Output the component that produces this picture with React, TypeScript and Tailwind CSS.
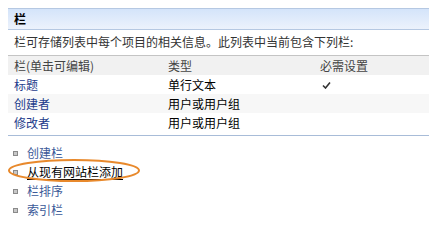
const font = { fontFamily: '"Noto Sans CJK SC", "Liberation Sans", sans-serif' };

function Bullet() {
  return <span className="mr-[9px] inline-block h-[5px] w-[5px] border border-[#8a8a8a] bg-[#c8c8c8]" />;
}

export default function App() {
  const rows = [
    { name: "标题", type: "单行文本", req: true },
    { name: "创建者", type: "用户或用户组", req: false },
    { name: "修改者", type: "用户或用户组", req: false },
  ];
  return (
    <div className="h-[228px] w-[429px] overflow-hidden bg-white pt-[8px] text-[12px] leading-none text-black" style={font}>
      {/* section header */}
      <div className="ml-[8px] flex h-[22px] items-center border-y border-[#b5c8e2] bg-gradient-to-b from-[#d4e4fa] to-[#ecf2fc] pl-[6px] font-bold">
        栏
      </div>
      <div className="ml-[14px] mt-[6px] text-[#333]">栏可存储列表中每个项目的相关信息。此列表中当前包含下列栏:</div>

      {/* columns table */}
      <div className="ml-[8px] mt-[7px]">
        <div className="flex h-[20px] items-center border-t border-[#c4c4c4] bg-[#f1f1f1] text-[#444]">
          <div className="w-[160px] pl-[6px]">栏(单击可编辑)</div>
          <div className="w-[152px]">类型</div>
          <div>必需设置</div>
        </div>
        {rows.map((r, i) => (
          <div key={r.name} className={`flex h-[19px] items-center ${i === 1 ? "bg-[#f7f7f7]" : "bg-white"}`}>
            <div className="w-[160px] pl-[6px] text-[#1e3c8c]">{r.name}</div>
            <div className="w-[152px]">{r.type}</div>
            <div className="pl-[2px]">
              {r.req && (
                <svg width="9" height="8" viewBox="0 0 9 8">
                  <path d="M1 4.5 L3.5 7 L8 1.5" fill="none" stroke="#333" strokeWidth="1.6" />
                </svg>
              )}
            </div>
          </div>
        ))}
        <div className="mt-[3px] border-t border-[#a8bcd8]" />
      </div>

      {/* actions */}
      <div className="relative ml-[13px] mt-[10px] flex flex-col gap-[5px]">
        {["创建栏", "从现有网站栏添加", "栏排序", "索引栏"].map((t, i) => (
          <div key={t} className="flex h-[14px] items-center">
            <Bullet />
            <span className={i === 1 ? "text-black underline underline-offset-2" : "text-[#3b5998]"}>{t}</span>
          </div>
        ))}
        <svg className="absolute left-[-6px] top-[12px]" width="134" height="25" viewBox="0 0 134 25">
          <ellipse cx="67" cy="12.5" rx="65" ry="10.5" fill="none" stroke="#e8892c" strokeWidth="2" />
        </svg>
      </div>
    </div>
  );
}
